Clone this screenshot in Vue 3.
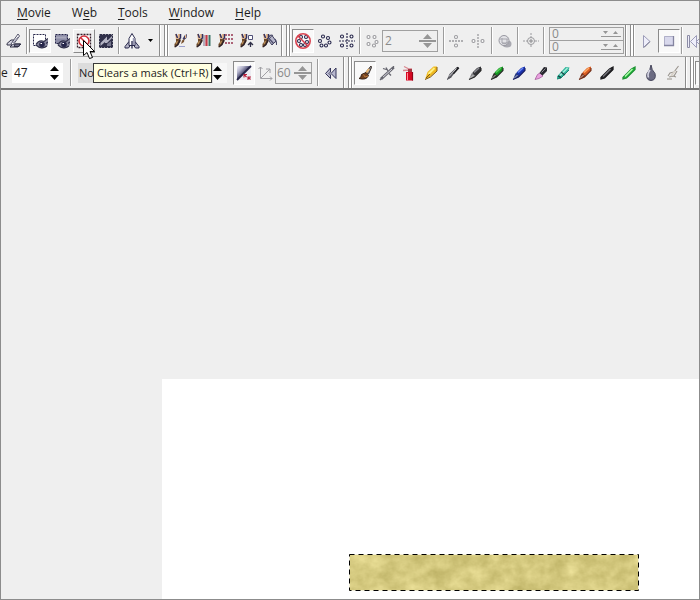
<script setup>
import { ref } from 'vue'

const menus = [
  ['', 'M', 'ovie'],
  ['W', 'e', 'b'],
  ['', 'T', 'ools'],
  ['', 'W', 'indow'],
  ['', 'H', 'elp'],
]

const navy = '#26264a'
const dim = '#9a9a9e'

const ring = (x, y, c = navy) =>
  `<circle cx="${x}" cy="${y}" r="1.5" fill="#fff" stroke="${c}" stroke-width="1.1"/>`

const eye =
  '<path d="M4 11.500Q7 6.500 12 8.500L16 6v6l-2.500 2.500Q8 17 4 11.500Z" fill="#8a8aa0"/><path d="M4 11.500Q7 6.500 12 8.500L16 5.500M16 9l-2 1.500" fill="none" stroke="#34344e" stroke-width="1.300"/><circle cx="10" cy="11.500" r="2.800" fill="#26264a"/><path d="M8.500 10.500h1.500" stroke="#fff"/><path d="M4 12q5 5 11 1" fill="none" stroke="#34344e" stroke-width="1.200"/>'

const smallBrush =
  '<path d="M2 1h2l1 5-2 1zM5 1h2v4L5 6z" fill="#e9b98a"/><path d="M3 1l1.500 4M7.500 1v4L5 7" fill="none" stroke="#33315f" stroke-width="1.500"/><path d="M3 6h4.500v2.500L5 12l-3.500 2.500V11L3 9z" fill="#6b4a2c"/><path d="M7 7l-2 4.500L2 14" fill="none" stroke="#2c2028" stroke-width="1.300"/><path d="M4.500 8L3 11" stroke="#b98d58" stroke-width="1.200"/>'

// Slanted pen: coloured barrel at the upper right, nib at the lower left.
const pen = (barrel, shine, nib, edge = '#292929') =>
  `<path d="M2 14.500l2.500-6 3-1.500 2 2-1.500 3z" fill="${nib}"/><path d="M5.500 7.500L10 3l4-1.500v4L9 10.500 7 10z" fill="${barrel}"/><path d="M7 7.500l5-4.500" stroke="${shine}" stroke-width="1.500"/><path d="M3 13.500L6.500 10" stroke="#ddd" stroke-width=".8"/><path d="M2 14.500l5.500-2.500 2-2 4.500-4.500V3" fill="none" stroke="${edge}" stroke-width="1.100"/>`

const stick = (fill, shine, edge) =>
  `<path d="M2 12.500L10.500 4 14 2v2.500L5.500 13 2 14z" fill="${fill}" stroke="${edge}" stroke-width="1.300"/><path d="M4 11.500l7.500-7.500" stroke="${shine}" stroke-width="1.300"/>`

const icons = {
  knife: '<path d="M1 10.500l4-3.500h3l-3 5H1zM4 14l3-3h8l-3 3z" fill="#d4d4df" stroke="#303047"/><path d="M5 11L12 1l1.500 2L7 12z" fill="#fff" stroke="#55556b"/><path d="M7 10l5-6" stroke="#8888a0"/><path d="M9 11h5l-1 2.500H8z" fill="#74748c" stroke="#303047"/>',
  maskShow: `<path d="M1.500 1.500h12v11h-12z" fill="#fff" stroke="#26264a" stroke-dasharray="2 1"/>${eye}`,
  maskFill: `<path d="M1.500 1.500h12v9h-12z" fill="#8c8ca6" stroke="#26264a" stroke-dasharray="2 1"/><path d="M2 4.500h10" stroke="#a9a9bc" stroke-width="2"/>${eye}`,
  maskClear: '<path d="M1.500 1.500h13v13h-13z" fill="#fff" stroke="#351f2a" stroke-width="1.300" stroke-dasharray="2 1"/><circle cx="8" cy="8" r="5" fill="none" stroke="#d0303c" stroke-width="1.600"/><path d="M4.500 4.500l7 7" stroke="#d0303c" stroke-width="1.600"/>',
  maskInvert: '<path d="M1 1h14v14H1z" fill="#30304a"/><path d="M1 1h14v14H1z" fill="none" stroke="#efefef" stroke-width="1" stroke-dasharray="1 2"/><path d="M2.500 10L9 3.500V7h1l4-4v2l-5 5H7v-1l-4.500 4z" fill="#b4b4c4"/><path d="M9 11l4-3v5H9z" fill="#77778e"/>',
  rocket: '<path d="M5 8.500l-4 5v1.500h3.500l2-3h3l2 3H15v-1.500l-4-5z" fill="#b4b4c6" stroke="#29294c"/><path d="M5 12.500V5.500L8 .5l3 5v7z" fill="#fff" stroke="#29294c"/><path d="M9.500 5v7" stroke="#9999b4" stroke-width="1.500"/><path d="M8 8v7.500" stroke="#29294c" stroke-width="1.300"/>',
  brushDraw: `${smallBrush}<path d="M11.500 2.500L14 1l-.5 4-2.500 2-1.500-1z" fill="#403c60"/><path d="M12.500 2v3" stroke="#e9b98a"/><path d="M11.500 6L9 7.500 8 11l3-2z" fill="#7a5230"/><path d="M6 13.500h6" stroke="#9aa0ce"/>`,
  brushLines: `${smallBrush}<path d="M9 2v11" stroke="#77708c"/><path d="M11.500 2v11" stroke="#c23a48" stroke-width="2.200"/><path d="M14.500 2v11" stroke="#3b7468" stroke-width="2"/>`,
  brushDots: `${smallBrush}<path d="M9 1v11M12 1v11M15 1v11" stroke="#a04a62" stroke-width="1.700" stroke-dasharray="2 2"/>`,
  brushStep: `${smallBrush}<path d="M9.500 2.500h4v4h-4z" fill="#fff" stroke="#505078"/><path d="M11.500 14V9.500M9 12l2.500-2.500 2.500 2.500" fill="none" stroke="#303048" stroke-width="1.300"/>`,
  brushFill: `${smallBrush}<path d="M8 6l3-3.500 4 5.500-4 4-3-4z" fill="#b6b6cb" stroke="#424260"/><path d="M8.500 6l4 4.500M8 4q1-2.500 4-1.500M14 6q2 3 1.500 6" fill="none" stroke="#4d4d6b" stroke-width="1.200"/>`,
  symOff: `${ring(6, 4)}${ring(11, 4)}${ring(4, 8)}${ring(12, 9)}${ring(6, 12)}${ring(10, 12)}<circle cx="8" cy="8" r="7.200" fill="none" stroke="#d94350" stroke-width="1.600"/><path d="M3 3l10 10" stroke="#d94350" stroke-width="1.500"/>`,
  symRing: ring(6, 3.5) + ring(11, 5) + ring(3, 8) + ring(12.5, 9.5) + ring(4.5, 12.5) + ring(9, 12.5),
  symGrid: `<path d="M8 0v16M0 8h16" stroke="#26264a" stroke-width="1.200" stroke-dasharray="2 1"/>${ring(3, 3.5)}${ring(12.5, 3.5)}${ring(3, 12.5)}${ring(12.5, 12.5)}`,
  symPoints: ring(4.5, 4, dim) + ring(10.5, 4, dim) + ring(12.5, 9, dim) + ring(10, 12.5, dim) + ring(4.5, 11, dim),
  mirrorH: `<path d="M0 8h15" stroke="${dim}" stroke-width="1.300" stroke-dasharray="2 1"/>${ring(7, 4, dim)}${ring(7, 12.5, dim)}`,
  mirrorV: `<path d="M7 1v15" stroke="${dim}" stroke-width="1.300" stroke-dasharray="2 1"/>${ring(2.5, 8, dim)}${ring(11.5, 8, dim)}`,
  sphere: '<ellipse cx="10" cy="11" rx="4.500" ry="3.500" fill="#a9a9b1"/><circle cx="7" cy="7.500" r="5" fill="#e3e3e7" stroke="#96969f"/><path d="M3 6h8M5 5v5h5V6M5 10q3 2 6-1" fill="none" stroke="#a6a6ae"/>',
  centre: `<path d="M8 0v15M0 8h16" stroke="${dim}" stroke-dasharray="2 1"/><circle cx="8" cy="8" r="3.500" fill="#eee" stroke="${dim}"/><path d="M6 8h4M8 6v4" stroke="#88888c"/>`,
  play: '<path d="M4.500 2.500v12l6.500-6z" fill="#eeeefa" stroke="#9c9cb8"/><path d="M11 8.500l-6 6" stroke="#77778d"/>',
  stop: '<path d="M3 3h10v10H3z" fill="#d8d8ec"/><path d="M3.500 12V3.500H12" fill="none" stroke="#b0b0c8"/><path d="M3 12.500h9.500V3" fill="none" stroke="#8484a0" stroke-width="1.300"/>',
  first: '<path d="M.5 2.500v12h2v-12z" fill="#eeeefa" stroke="#8c8ca5"/><path d="M9.500 2.500v12l-6-6zM15.500 2.500v12l-6-6z" fill="#eeeefa" stroke="#9c9cb8"/>',
  gradient: '<defs><linearGradient id="ramp" x2="1" y2="1"><stop stop-color="#f4f4fc"/><stop offset=".25" stop-color="#b4b4cc"/><stop offset=".5" stop-color="#44446a"/></linearGradient></defs><path d="M1 1h14v14H1z" fill="#ececf2"/><path d="M1 1h14L1 15z" fill="url(#ramp)"/><path d="M1 15L15 1" stroke="#252548" stroke-width="1.800"/><path d="M8 12.500V9.500h3M8 9.500l2.500 2.500M12 15v-3h3M12 12l2.500 2.500" fill="none" stroke="#b91e39" stroke-width="1.100"/>',
  axes: '<path d="M3.500 2v11.500H15M1.500 4l2-2 2 2M13 11.500l2 2-2 2M4 13L13 4M9 4h4v4" fill="none" stroke="#a0a0a4"/>',
  rewind: '<path d="M7.500 3l-5 5.500 5 5V10L6 8.500 7.500 7zM13 3L8 8.500l5 5z" fill="#b8b8ce" stroke="#36365c"/>',
  brush: '<path d="M9 7l5-6 .5 1.500L11.500 9z" fill="#8d8d9a" stroke="#3c3129"/><path d="M12 4L9 8" stroke="#ebbb76" stroke-width="2"/><path d="M2 13.500q2.500-1 2.500-4L9 7.500l2.500 3q-2 5-9.500 3z" fill="#73421e" stroke="#352116"/><path d="M6.500 9.500l1.500 2.500 3-1" fill="none" stroke="#bd7b3d"/>',
  airbrush: '<path d="M2 14L14.500 2.500" stroke="#66666f" stroke-width="2.800"/><path d="M3 13l10-9" stroke="#d8d8e1"/><path d="M4 3.500l5 1.500M7 2.500l2 3.500M1 15l3-3M10 8.500l2 2M14.500 1v3" fill="none" stroke="#66666f" stroke-width="1.300"/>',
  spray: '<path d="M8 6V4h3M8 4L3 1.500M8 5L2 5.500" fill="none" stroke="#d98890" stroke-width="1.300"/><path d="M5 7h7v8.500H5z" fill="#d70822"/><path d="M6.500 8v7" stroke="#ff8c96"/><path d="M11.500 7v8.500" stroke="#8c0719" stroke-width="1.200"/><path d="M7 4h4v3H7z" fill="#a33742"/>',
  goldPen: '<path d="M2 14.500L4.500 7l6-5.500h3.500V6L7 12z" fill="#efb91f"/><path d="M5.500 9l6-6" stroke="#fff080" stroke-width="2"/><path d="M2 14.500L7.500 12 14 6V2M3 13l4-4" fill="none" stroke="#805816"/>',
  pencil: '<path d="M2 14.500L4.500 9 12 2l2 .5L6.500 12z" fill="#55555c"/><path d="M8 8.500l5.500-6" stroke="#202024" stroke-width="2.400"/><path d="M4 11.500l7.500-8" stroke="#d4d4d8"/><path d="M2 14.500L6.500 12" stroke="#55555c"/>',
  ink: pen('#343438', '#8b8b91', '#858588'),
  greenPen: pen('#159522', '#55ce58', '#2f332b'),
  bluePen: pen('#1932ad', '#6c87f4', '#293a82', '#1a1d60'),
  pinkPen: '<path d="M2 14.500l2.500-5L7 8l3 3-4 2.500z" fill="#e8a1df" stroke="#a75d9d" stroke-width=".8"/><path d="M6.500 8l4.500-6 3 .5V6L9.500 10.500z" fill="#29292f"/><path d="M8.500 7.500l4-4" stroke="#8b8b94"/>',
  teal: '<path d="M2 11.500L10.500 2l4 .5-1 3L6 13l-4 1z" fill="#36b69c"/><path d="M5 10.500l7.500-7.500" stroke="#a8f0dc" stroke-width="1.400"/><path d="M2 14l4-1 8-8" fill="none" stroke="#168370"/><path d="M6 7l4 3M3 11l3 1.500" stroke="#174a48" stroke-width="1.400"/>',
  orange: pen('#d95c22', '#ffad68', '#7b321b', '#71301c'),
  blackStick: stick('#29292e', '#75757d', '#19191c'),
  greenStick: stick('#26b940', '#b4ffae', '#1c9132'),
  drop: '<path d="M8 0q.5 5 4 8.500Q13.500 15 8 15.500 2.500 15 4 8.500 7.500 5 8 0z" fill="#6b6b82" stroke="#44445a"/><path d="M7 5q-3 4-1.500 7.500" fill="none" stroke="#d6d6e4" stroke-width="1.600"/>',
  clone: '<path d="M13.500 1L9 7M12 6l-3 5-5 1M9 7L5 8l-2 3M8 11l3 1M2 14h5" fill="none" stroke="#98938c" stroke-width="1.100"/><path d="M10 6l-4 5" stroke="#d8d2c9" stroke-width="2"/>',
  swatches: '<path d="M1 1h5v2H1z" fill="#9b2f4c"/><path d="M1 4h5v2H1z" fill="#8c42aa"/><path d="M1 7h5v2H1z" fill="#275b9d"/><path d="M1 10h5v2H1z" fill="#18a36c"/><path d="M1 13h5v2H1z" fill="#7f8930"/>',
}

const maskTools = [
  { icon: 'maskShow', name: 'Show mask', state: 'pressed' },
  { icon: 'maskFill', name: 'Fill mask' },
  { icon: 'maskClear', name: 'Clear mask', state: 'raised' },
  { icon: 'maskInvert', name: 'Invert mask' },
]
const brushTools = ['brushDraw', 'brushLines', 'brushDots', 'brushStep', 'brushFill']
const media = [
  'airbrush', 'spray', 'goldPen', 'pencil', 'ink', 'greenPen', 'bluePen',
  'pinkPen', 'teal', 'orange', 'blackStick', 'greenStick', 'drop', 'clone',
]

const size = ref('47')
const points = ref('2')
const angle = ref('60')
const offsetX = ref('0')
const offsetY = ref('0')
</script>

<template>
  <div class="app">
    <nav class="menu">
      <button v-for="m in menus" :key="m.join('')" class="menu-item">{{ m[0] }}<u>{{ m[1] }}</u>{{ m[2] }}</button>
    </nav>

    <div class="bar bar-top">
      <button class="tool" aria-label="Knife"><svg class="icon" viewBox="0 0 16 16" v-html="icons.knife" /></button>
      <i class="sep" />
      <button v-for="t in maskTools" :key="t.icon" class="tool" :class="t.state" :aria-label="t.name">
        <svg class="icon" viewBox="0 0 16 16" v-html="icons[t.icon]" />
      </button>
      <i class="sep" />
      <button class="tool" aria-label="Rocket"><svg class="icon" viewBox="0 0 16 16" v-html="icons.rocket" /></button>
      <button class="more" aria-label="More"><svg class="caret" viewBox="0 0 5 3"><path d="M0 0h5L2.500 3z" /></svg></button>
      <i class="grip" />
      <button v-for="b in brushTools" :key="b" class="tool" :aria-label="b">
        <svg class="icon" viewBox="0 0 16 16" v-html="icons[b]" />
      </button>
      <i class="grip" />
      <button class="tool pressed" aria-label="No symmetry"><svg class="icon" viewBox="0 0 16 16" v-html="icons.symOff" /></button>
      <button class="tool" aria-label="Radial"><svg class="icon" viewBox="0 0 16 16" v-html="icons.symRing" /></button>
      <button class="tool" aria-label="Planes"><svg class="icon" viewBox="0 0 16 16" v-html="icons.symGrid" /></button>
      <i class="sep" />
      <svg class="icon mark" viewBox="0 0 16 16" v-html="icons.symPoints" />
      <div class="spin wide off">
        <input v-model="points" class="field" aria-label="Points" disabled />
        <svg class="arrows big" viewBox="0 0 17 16"><path d="M4 6h9L8.500 1zM4 10h9l-4.500 5zM0 7h17v2H0z" /></svg>
      </div>
      <i class="sep" />
      <button class="tool" aria-label="Mirror horizontal" disabled><svg class="icon" viewBox="0 0 16 16" v-html="icons.mirrorH" /></button>
      <button class="tool" aria-label="Mirror vertical" disabled><svg class="icon" viewBox="0 0 16 16" v-html="icons.mirrorV" /></button>
      <i class="sep" />
      <button class="tool" aria-label="Sphere" disabled><svg class="icon" viewBox="0 0 16 16" v-html="icons.sphere" /></button>
      <i class="sep" />
      <button class="tool" aria-label="Centre" disabled><svg class="icon" viewBox="0 0 16 16" v-html="icons.centre" /></button>
      <i class="sep" />
      <div class="offsets">
        <div class="offset">
          <input v-model="offsetX" class="field" aria-label="Centre X" disabled />
          <svg class="arrows flat" viewBox="0 0 20 8"><path d="M2 1h5L4.500 4zM12 4h5l-2.500-3zM0 6h20v1H0z" /></svg>
        </div>
        <div class="offset">
          <input v-model="offsetY" class="field" aria-label="Centre Y" disabled />
          <svg class="arrows flat" viewBox="0 0 20 8"><path d="M2 1h5L4.500 4zM12 4h5l-2.500-3zM0 6h20v1H0z" /></svg>
        </div>
      </div>
      <i class="grip" />
      <button class="tool" aria-label="Play"><svg class="icon" viewBox="0 0 16 16" v-html="icons.play" /></button>
      <button class="tool pressed" aria-label="Stop"><svg class="icon" viewBox="0 0 16 16" v-html="icons.stop" /></button>
      <i class="sep" />
      <button class="tool" aria-label="First frame"><svg class="icon" viewBox="0 0 16 16" v-html="icons.first" /></button>
    </div>

    <div class="bar bar-bottom">
      <label class="size-label" for="size">e</label>
      <div class="spin size">
        <input id="size" v-model="size" class="field" />
        <svg class="arrows" viewBox="0 0 9 16"><path d="M0 6h9L4.500 1zM0 10h9l-4.500 5z" /></svg>
      </div>
      <i class="sep" />
      <div class="nib">
        <select class="nib-select" aria-label="Nib"><option>No</option></select>
        <svg class="arrows" viewBox="0 0 9 16"><path d="M0 6h9L4.500 1zM0 10h9l-4.500 5z" /></svg>
      </div>
      <button class="tool pressed" aria-label="Gradient"><svg class="icon" viewBox="0 0 16 16" v-html="icons.gradient" /></button>
      <svg class="icon mark" viewBox="0 0 16 16" v-html="icons.axes" />
      <div class="spin narrow off">
        <input v-model="angle" class="field" aria-label="Angle" disabled />
        <svg class="arrows big" viewBox="0 0 17 16"><path d="M4 6h9L8.500 1zM4 10h9l-4.500 5zM0 7h17v2H0z" /></svg>
      </div>
      <i class="sep" />
      <button class="tool" aria-label="Rewind"><svg class="icon" viewBox="0 0 16 16" v-html="icons.rewind" /></button>
      <i class="grip" />
      <button class="tool pressed" aria-label="Brush"><svg class="icon" viewBox="0 0 16 16" v-html="icons.brush" /></button>
      <button v-for="m in media" :key="m" class="tool" :aria-label="m">
        <svg class="icon" viewBox="0 0 16 16" v-html="icons[m]" />
      </button>
      <i class="grip tight" />
      <button class="tool pressed" aria-label="Swatches"><svg class="icon" viewBox="0 0 16 16" v-html="icons.swatches" /></button>
    </div>

    <main class="workspace">
      <div class="paper">
        <svg class="selection" viewBox="0 0 290 37">
          <defs>
            <filter id="parchment" x="0" y="0" width="100%" height="100%" color-interpolation-filters="sRGB">
              <feTurbulence type="fractalNoise" baseFrequency="0.060 0.070" numOctaves="4" seed="8" />
              <feColorMatrix values="0.240 0 0 0 0.715  0.240 0 0 0 0.670  0.260 0 0 0 0.370  0 0 0 0 1" />
            </filter>
          </defs>
          <rect width="290" height="37" filter="url(#parchment)" />
          <rect x="0.500" y="0.500" width="289" height="36" fill="none" stroke="#f3f0d8" />
          <rect x="0.500" y="0.500" width="289" height="36" fill="none" stroke="#000" stroke-dasharray="5 4" />
        </svg>
      </div>
    </main>

    <div class="tooltip" role="tooltip">Clears a mask (Ctrl+R)</div>
    <svg class="cursor" viewBox="0 0 12 19">
      <path d="M0.500 0.500v15l3.500-3 2.500 6 3-1-2.500-6h4.500z" fill="#fff" stroke="#000" />
    </svg>
  </div>
</template>

<style>
body {
  margin: 0;
  background: #efefef;
}
</style>

<style scoped>
.app {
  position: relative;
  display: flex;
  flex-direction: column;
  box-sizing: border-box;
  min-height: 100vh;
  overflow: hidden;
  border: 1px solid #8c8c8c;
  background: #efefef;
  color: #1c1c1c;
  font: 12px/16px "Open Sans", "Noto Sans", sans-serif;
}
button,
input,
select {
  margin: 0;
  padding: 0;
  border: 0;
  background: none;
  color: inherit;
  font: inherit;
}
.menu {
  display: flex;
  gap: 21px;
  height: 23px;
  padding-left: 16px;
  border-bottom: 1px solid #8f8f8f;
}
.menu-item u {
  text-underline-offset: 2px;
}
.bar {
  display: flex;
  align-items: center;
  height: 31px;
  overflow: hidden;
}
.bar > * {
  flex: none;
}
.bar-top {
  padding-left: 2px;
  border-bottom: 1px solid #a5a5a5;
}
.bar-bottom {
  border-bottom: 2px solid #777;
}
.tool {
  display: flex;
  align-items: center;
  justify-content: center;
  box-sizing: border-box;
  width: 22px;
  height: 24px;
  border: 1px solid transparent;
}
.pressed {
  border-color: #8a8a8a #fff #fff #8a8a8a;
  background: #f9f9f9;
}
.raised {
  border-color: #fff #8a8a8a #8a8a8a #fff;
}
.icon {
  display: block;
  flex: none;
  width: 16px;
  height: 16px;
}
.mark {
  margin: 0 2px;
}
.more {
  display: flex;
  align-items: center;
  justify-content: center;
  width: 15px;
  height: 24px;
}
.caret {
  width: 5px;
  height: 3px;
}
.sep {
  box-sizing: border-box;
  width: 2px;
  height: 27px;
  margin: 0 1px;
  border-left: 1px solid #9c9c9c;
  border-right: 1px solid #fff;
}
.grip {
  box-sizing: border-box;
  width: 10px;
  height: 31px;
  margin: 0 1px;
  border-left: 1px solid #8c8c8c;
  background: linear-gradient(90deg, #fff 1px, transparent 1px 4px, #8c8c8c 4px 5px, #fff 5px 7px, #8c8c8c 7px 8px, #fff 8px);
}
.tight {
  margin-right: 0;
}
.spin {
  display: flex;
  align-items: center;
  box-sizing: border-box;
  background: #fff;
}
.field {
  flex: 1;
  min-width: 0;
  height: 16px;
}
.off {
  height: 22px;
  border: 1px solid #a0a0a0;
  background: none;
  color: #8a8a8a;
}
.wide {
  width: 56px;
  padding: 0 1px 0 2px;
  margin-right: 4px;
}
.narrow {
  width: 37px;
  padding-left: 1px;
  margin-right: 4px;
}
.size {
  width: 51px;
  height: 20px;
  padding: 0 4px 0 2px;
  margin-right: 6px;
}
.size-label {
  width: 11px;
}
.arrows {
  flex: none;
  width: 9px;
  height: 16px;
  fill: #000;
}
.big {
  width: 17px;
  fill: #969696;
}
.flat {
  width: 20px;
  height: 8px;
  fill: #969696;
}
.offsets {
  display: flex;
  flex-direction: column;
  gap: 1px;
  box-sizing: border-box;
  width: 75px;
  margin-left: 3px;
  border: 1px solid #a0a0a0;
  background: #a0a0a0;
}
.offset {
  display: flex;
  align-items: center;
  height: 12px;
  padding: 0 2px;
  background: #efefef;
  color: #8a8a8a;
}
.offset .field {
  height: 12px;
}
.nib {
  display: flex;
  align-items: center;
  box-sizing: border-box;
  width: 149px;
  height: 20px;
  padding-right: 5px;
  margin: 0 6px 0 5px;
  background: #f7f7f7;
}
.nib-select {
  flex: 1;
  min-width: 0;
  height: 20px;
  padding-left: 1px;
  background: #dcdcdc;
  appearance: none;
  font-size: 11px;
}
.workspace {
  display: flex;
  flex: 1;
  padding: 289px 0 0 161px;
}
.paper {
  position: relative;
  flex: 1;
  background: #fff;
}
.selection {
  position: absolute;
  left: 187px;
  top: 175px;
  width: 290px;
  height: 37px;
}
.tooltip {
  position: absolute;
  left: 92px;
  top: 62px;
  padding: 1px 3px;
  border: 1px solid #3a3a3a;
  background: #ffffe1;
  color: #1c1c1c;
  font-size: 11px;
  white-space: nowrap;
}
.cursor {
  position: absolute;
  left: 82px;
  top: 39px;
  width: 12px;
  height: 19px;
}
</style>
